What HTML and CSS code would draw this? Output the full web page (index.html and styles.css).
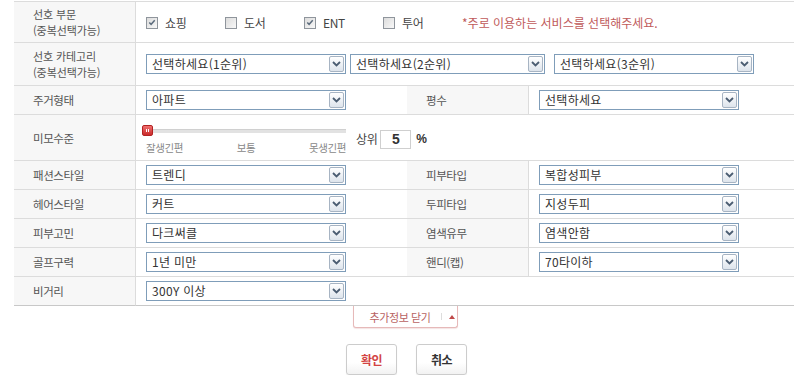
FILE: index.html
```html
<!DOCTYPE html>
<html lang="ko">
<head>
    <meta charset="UTF-8">
    <title>추가정보 입력</title>
    <link rel="stylesheet" href="styles.css">
</head>
<body>
    <div class="form-wrap">
        <div class="info-grid">
            <!-- 선호 부문 -->
            <div class="th th-two"><p>선호 부문<br>(중복선택가능)</p></div>
            <div class="td span3 check-row">
                <label class="chk"><span class="box on"><svg width="11" height="11" viewBox="0 0 11 11"><path d="M2.5 5.5l2 2 4-4.5" fill="none" stroke="#5b6b7c" stroke-width="1.6"/></svg></span>쇼핑</label>
                <label class="chk"><span class="box"></span>도서</label>
                <label class="chk"><span class="box on"><svg width="11" height="11" viewBox="0 0 11 11"><path d="M2.5 5.5l2 2 4-4.5" fill="none" stroke="#5b6b7c" stroke-width="1.6"/></svg></span>ENT</label>
                <label class="chk"><span class="box"></span>투어</label>
                <span class="note">*주로 이용하는 서비스를 선택해주세요.</span>
            </div>

            <!-- 선호 카테고리 -->
            <div class="th th-two"><p>선호 카테고리<br>(중복선택가능)</p></div>
            <div class="td span3">
                <div class="sel"><span class="sel-text">선택하세요(1순위)</span><span class="sel-btn"><svg width="9" height="6" viewBox="0 0 9 6"><path d="M1 1l3.5 3.5L8 1" fill="none" stroke="#4b5d72" stroke-width="1.8"/></svg></span></div>
                <div class="sel sel-mid"><span class="sel-text">선택하세요(2순위)</span><span class="sel-btn"><svg width="9" height="6" viewBox="0 0 9 6"><path d="M1 1l3.5 3.5L8 1" fill="none" stroke="#4b5d72" stroke-width="1.8"/></svg></span></div>
                <div class="sel sel-last"><span class="sel-text">선택하세요(3순위)</span><span class="sel-btn"><svg width="9" height="6" viewBox="0 0 9 6"><path d="M1 1l3.5 3.5L8 1" fill="none" stroke="#4b5d72" stroke-width="1.8"/></svg></span></div>
            </div>

            <div class="th">주거형태</div>
            <div class="td"><div class="sel"><span class="sel-text">아파트</span><span class="sel-btn"><svg width="9" height="6" viewBox="0 0 9 6"><path d="M1 1l3.5 3.5L8 1" fill="none" stroke="#4b5d72" stroke-width="1.8"/></svg></span></div></div>
            <div class="th">평수</div>
            <div class="td"><div class="sel"><span class="sel-text">선택하세요</span><span class="sel-btn"><svg width="9" height="6" viewBox="0 0 9 6"><path d="M1 1l3.5 3.5L8 1" fill="none" stroke="#4b5d72" stroke-width="1.8"/></svg></span></div></div>

            <!-- 미모수준 슬라이더 -->
            <div class="th">미모수준</div>
            <div class="td span3 beauty">
                <div class="slider">
                    <div class="track"><span class="handle"></span></div>
                    <div class="scale"><span>잘생긴편</span><span>보통</span><span>못생긴편</span></div>
                </div>
                <span class="rank">상위</span>
                <span class="rank-box">5</span>
                <span class="pct">%</span>
            </div>

            <div class="th">패션스타일</div>
            <div class="td"><div class="sel"><span class="sel-text">트렌디</span><span class="sel-btn"><svg width="9" height="6" viewBox="0 0 9 6"><path d="M1 1l3.5 3.5L8 1" fill="none" stroke="#4b5d72" stroke-width="1.8"/></svg></span></div></div>
            <div class="th">피부타입</div>
            <div class="td"><div class="sel"><span class="sel-text">복합성피부</span><span class="sel-btn"><svg width="9" height="6" viewBox="0 0 9 6"><path d="M1 1l3.5 3.5L8 1" fill="none" stroke="#4b5d72" stroke-width="1.8"/></svg></span></div></div>

            <div class="th">헤어스타일</div>
            <div class="td"><div class="sel"><span class="sel-text">커트</span><span class="sel-btn"><svg width="9" height="6" viewBox="0 0 9 6"><path d="M1 1l3.5 3.5L8 1" fill="none" stroke="#4b5d72" stroke-width="1.8"/></svg></span></div></div>
            <div class="th">두피타입</div>
            <div class="td"><div class="sel"><span class="sel-text">지성두피</span><span class="sel-btn"><svg width="9" height="6" viewBox="0 0 9 6"><path d="M1 1l3.5 3.5L8 1" fill="none" stroke="#4b5d72" stroke-width="1.8"/></svg></span></div></div>

            <div class="th">피부고민</div>
            <div class="td"><div class="sel"><span class="sel-text">다크써클</span><span class="sel-btn"><svg width="9" height="6" viewBox="0 0 9 6"><path d="M1 1l3.5 3.5L8 1" fill="none" stroke="#4b5d72" stroke-width="1.8"/></svg></span></div></div>
            <div class="th">염색유무</div>
            <div class="td"><div class="sel"><span class="sel-text">염색안함</span><span class="sel-btn"><svg width="9" height="6" viewBox="0 0 9 6"><path d="M1 1l3.5 3.5L8 1" fill="none" stroke="#4b5d72" stroke-width="1.8"/></svg></span></div></div>

            <div class="th">골프구력</div>
            <div class="td"><div class="sel"><span class="sel-text">1년 미만</span><span class="sel-btn"><svg width="9" height="6" viewBox="0 0 9 6"><path d="M1 1l3.5 3.5L8 1" fill="none" stroke="#4b5d72" stroke-width="1.8"/></svg></span></div></div>
            <div class="th">핸디(캡)</div>
            <div class="td"><div class="sel"><span class="sel-text">70타이하</span><span class="sel-btn"><svg width="9" height="6" viewBox="0 0 9 6"><path d="M1 1l3.5 3.5L8 1" fill="none" stroke="#4b5d72" stroke-width="1.8"/></svg></span></div></div>

            <div class="th">비거리</div>
            <div class="td span3"><div class="sel"><span class="sel-text">300Y 이상</span><span class="sel-btn"><svg width="9" height="6" viewBox="0 0 9 6"><path d="M1 1l3.5 3.5L8 1" fill="none" stroke="#4b5d72" stroke-width="1.8"/></svg></span></div></div>
        </div>

        <div class="more-area">
            <button class="more-btn" type="button">추가정보 닫기<span class="divider"></span><span class="up"></span></button>
        </div>

        <div class="btn-area">
            <button class="btn btn-ok" type="button">확인</button>
            <button class="btn" type="button">취소</button>
        </div>
    </div>
</body>
</html>
```

FILE: styles.css
```css
/* 기본 */
* {
    margin: 0;
    padding: 0;
    box-sizing: border-box;
}

body {
    background: #fff;
    color: #555;
    font-family: "Noto Sans CJK KR", "Noto Sans", sans-serif;
    font-size: 11.5px;
    letter-spacing: -0.4px;
    line-height: 14px;
}

.form-wrap {
    width: 780px;
    margin: 1px 0 0 14px;
}

/* 정보 테이블 */
.info-grid {
    display: grid;
    grid-template-columns: 122px 271px 122px 1fr;
    grid-template-rows: 41px 43px 29px 46px repeat(5, 29px);
    border-top: 1px solid #dcdcdc;
}

.th,
.td {
    display: flex;
    align-items: center;
    border-bottom: 1px solid #dcdcdc;
}

.info-grid > div:nth-last-child(-n+2) {
    border-bottom-color: #c8c8c8;
}

.th {
    background: #f7f7f7;
    border-right: 1px solid #dcdcdc;
    padding-left: 19px;
    color: #555;
}

.th-two p {
    font-size: 11px;
    letter-spacing: -0.1px;
    line-height: 16px;
}

.td {
    padding-left: 10px;
    color: #333;
}

.span3 {
    grid-column: span 3;
}

/* 체크박스 */
.check-row {
    padding-top: 1px;
}

.chk {
    display: flex;
    align-items: center;
    width: 79px;
    color: #444;
    font-size: 12px;
}

.box {
    width: 12px;
    height: 12px;
    margin-right: 7px;
    border: 1px solid #8f959c;
    background: linear-gradient(135deg, #dcdcdc, #f8f8f8);
    display: flex;
    align-items: center;
    justify-content: center;
}

.note {
    color: #c05a5a;
    font-size: 12px;
    letter-spacing: 0;
}

/* 셀렉트 */
.sel {
    width: 200px;
    height: 20px;
    border: 1px solid #7f9db9;
    background: #fff;
    display: flex;
    align-items: center;
    justify-content: space-between;
    padding: 0 1px 0 5px;
    color: #333;
    font-size: 12px;
    letter-spacing: 0.3px;
}

.sel-mid {
    width: 195px;
    margin-left: 4px;
}

.sel-last {
    margin-left: 9px;
}

.sel-btn {
    width: 15px;
    height: 16px;
    border: 1px solid #a7b4c3;
    border-radius: 2px;
    background: linear-gradient(#ffffff, #dde4ec);
    display: flex;
    align-items: center;
    justify-content: center;
}

/* 미모수준 */
.beauty {
    padding-top: 3px;
}

.slider {
    width: 200px;
}

.track {
    position: relative;
    height: 4px;
    margin: 5px 0 9px;
    background: #e2e2e2;
    border-top: 1px solid #d0d0d0;
}

.handle {
    position: absolute;
    left: -4px;
    top: -5px;
    width: 11px;
    height: 11px;
    border-radius: 2px;
    background: linear-gradient(#f07070, #c92a2a);
    border: 1px solid #b32222;
}

.handle::before,
.handle::after {
    content: '';
    position: absolute;
    top: 3px;
    width: 1px;
    height: 3px;
    background: #fff;
}

.handle::before {
    left: 3px;
}

.handle::after {
    left: 5px;
}

.scale {
    display: flex;
    justify-content: space-between;
    color: #888;
    font-size: 10.5px;
    line-height: 12px;
}

.rank {
    margin-left: 10px;
    font-size: 12px;
    color: #444;
}

.rank-box {
    width: 31px;
    height: 19px;
    margin-left: 3px;
    border: 1px solid #cfcfcf;
    display: flex;
    align-items: center;
    justify-content: center;
    font-family: "Liberation Sans", sans-serif;
    font-weight: bold;
    font-size: 14px;
    color: #333;
}

.pct {
    margin-left: 5px;
    font-family: "Liberation Sans", sans-serif;
    font-weight: bold;
    font-size: 12px;
    color: #333;
}

/* 추가정보 닫기 */
.more-area {
    display: flex;
    justify-content: center;
    padding-left: 2px;
}

.more-btn {
    width: 105px;
    height: 22px;
    padding-left: 16px;
    border: 1px solid #e6b9b9;
    border-top: none;
    border-radius: 0 0 3px 3px;
    background: #fff;
    color: #b86262;
    font-family: inherit;
    font-size: 11px;
    letter-spacing: -0.4px;
    display: flex;
    align-items: center;
    justify-content: flex-start;
    box-shadow: 0 1px 1px rgba(200, 120, 120, 0.2);
}

.divider {
    width: 1px;
    height: 7px;
    margin: 0 7px 0 10px;
    background: #ddd;
}

.up {
    width: 0;
    height: 0;
    border-left: 3px solid transparent;
    border-right: 3px solid transparent;
    border-bottom: 4px solid #c04848;
}

/* 확인 / 취소 */
.btn-area {
    display: flex;
    justify-content: center;
    gap: 19px;
    margin-top: 16px;
    padding-left: 5px;
}

.btn {
    width: 51px;
    height: 31px;
    border: 1px solid #cccccc;
    border-radius: 3px;
    background: linear-gradient(#ffffff 60%, #f2f2f2);
    box-shadow: 0 1px 1px rgba(0, 0, 0, 0.08);
    font-family: inherit;
    font-size: 12px;
    font-weight: bold;
    letter-spacing: -0.5px;
    color: #333;
}

.btn-ok {
    color: #d34444;
}
```
